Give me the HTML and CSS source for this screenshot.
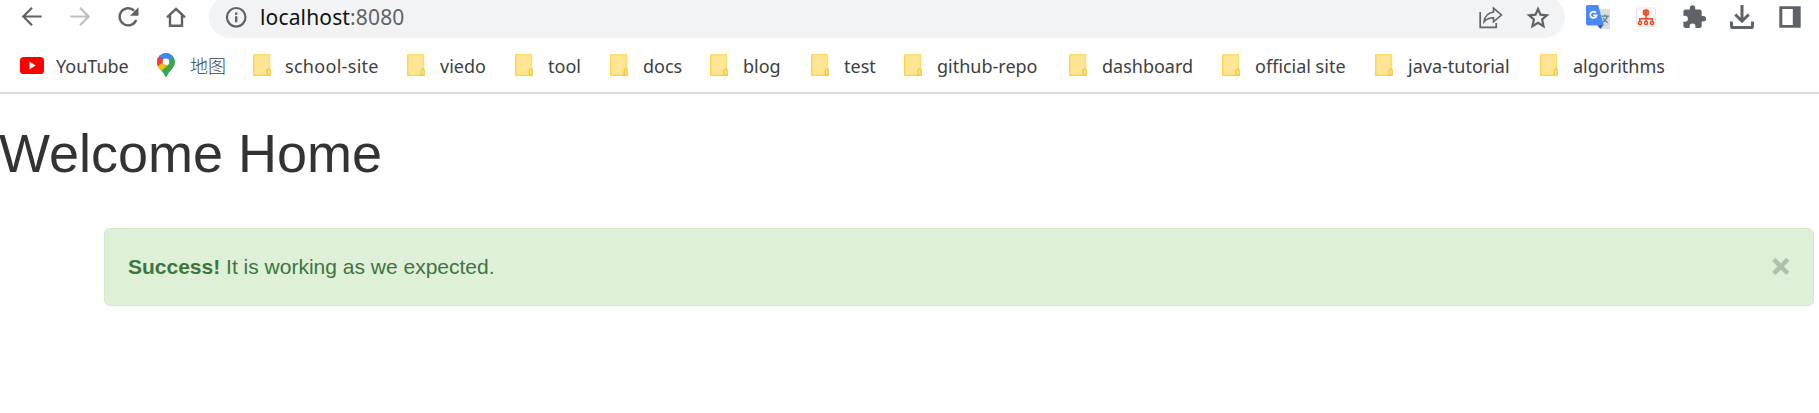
FILE: index.html
```html
<!DOCTYPE html>
<html lang="en">
<head>
<meta charset="utf-8">
<title>Welcome Home</title>
<link rel="stylesheet" href="styles.css">
</head>
<body>
<svg class="defs" aria-hidden="true">
  <symbol id="folder" viewBox="0 0 18 22">
    <rect x=".7" y=".7" width="15.8" height="20.4" rx=".6" fill="#ffe594" stroke="#fddc6c" stroke-width="1.4"/>
    <path d="M.7 1v20.3H14" fill="none" stroke="#fbd34f" stroke-width="1.2"/>
    <path d="M14.2 21v-4.6q0-1.5 1.5-1.5t1.5 1.5V21z" fill="#ffe594" stroke="#efc83c" stroke-width="1.3"/>
  </symbol>
</svg>
<header class="browser">
  <div class="toolbar">
    <nav class="nav">
      <svg class="icon" viewBox="0 0 28 28"><path d="M23.6 13.5H5.5M14 4.8 5.3 13.5l8.7 8.7" fill="none" stroke="#5f6368" stroke-width="2.2"/></svg>
      <svg class="icon" viewBox="0 0 28 28"><path d="M4.4 13.5h18.1M14 4.8l8.7 8.7-8.7 8.7" fill="none" stroke="#bcbec1" stroke-width="2.2"/></svg>
      <svg class="icon" viewBox="0 0 28 28"><path d="M20.2 7.6A8.6 8.6 0 1 0 22.2 17" fill="none" stroke="#5f6368" stroke-width="2.4"/><path d="M24.5 4.2v8.5H16z" fill="#5f6368"/></svg>
      <svg class="icon" viewBox="0 0 28 28"><path d="M5 14.3 14 5.8l9 8.5M8 12.5v10.3h12V12.5" fill="none" stroke="#5f6368" stroke-width="2.4"/></svg>
    </nav>
    <div class="address">
      <svg class="icon" viewBox="0 0 28 28"><circle cx="14.2" cy="14.300" r="9.300" fill="none" stroke="#5f6368" stroke-width="2.200"/><path d="M13 9.500h2.400v2.300H13zM13 13.200h2.400v6H13z" fill="#5f6368"/></svg>
      <span class="url">localhost<span class="port">:8080</span></span>
      <svg class="icon share" viewBox="0 0 28 28"><path d="M3.200 9v15.300h16V20" fill="none" stroke="#5f6368" stroke-width="1.700"/><path d="M16.500 5.200 24.400 12l-7.900 6.800v-4.100c-4 0-7 1.200-9.400 4 .6-5.200 3.800-8.900 9.400-9.700z" fill="none" stroke="#5f6368" stroke-width="1.600"/></svg>
      <svg class="icon star" viewBox="0 0 28 28"><path d="m14 6 2.500 5.700 6.400.6-4.800 4.200 1.400 6.600L14 19.700l-5.500 3.400 1.400-6.600-4.800-4.200 6.400-.6z" fill="none" stroke="#5f6368" stroke-width="2.200"/></svg>
    </div>
    <div class="extensions">
      <svg class="icon" viewBox="0 0 28 28"><path d="M13 6h13v20H17z" fill="#dadcdf"/><path d="M13 21.500h6.800L16.200 26z" fill="#3446b8"/><path d="M2 3.500Q2 2 3.500 2h10.700l5.600 20.500H4q-2 0-2-2z" fill="#4a8af4"/><path d="M12 9.800a3.200 3.200 0 1 0 .6 2.500H9.300" fill="none" stroke="#fff" stroke-width="1.800"/><path d="M17.500 13.200H25M20.800 11.500v1.700M23.300 13.200q-1 4.200-4.600 6.300M19 14.800q1.600 3.300 4.800 5" fill="none" stroke="#607d8b" stroke-width="1.200"/></svg>
      <svg class="icon" viewBox="0 0 28 28"><rect x="4.500" y="5" width="19" height="18.500" rx="2" fill="#fafafa" stroke="#e6e6e6"/><g fill="none" stroke="#f0441c" stroke-width="1.500"><path d="M14 12v6.500M7.800 18.500v-2.800h12.400v2.800"/><circle cx="8" cy="20" r="1.600"/><circle cx="14" cy="20" r="1.600"/><circle cx="20" cy="20" r="1.600"/></g><circle cx="14" cy="9.500" r="3.300" fill="#f0441c"/><path d="m13 8.300-1 1.200 1 1.200M15 8.300l1 1.200-1 1.200" fill="none" stroke="#ffb8a6" stroke-width=".7"/></svg>
      <svg class="icon" viewBox="0 0 28 28"><path transform="translate(1.200 1.200) scale(1.080)" d="M20.500 11H19V7c0-1.100-.9-2-2-2h-4V3.500a2.500 2.500 0 0 0-5 0V5H4c-1.100 0-2 .9-2 2v3.800h1.500a2.700 2.700 0 0 1 0 5.400H2V20c0 1.100.9 2 2 2h3.800v-1.500a2.700 2.700 0 0 1 5.400 0V22H17c1.100 0 2-.9 2-2v-4h1.500a2.500 2.500 0 0 0 0-5z" fill="#5f6368"/></svg>
      <svg class="icon" viewBox="0 0 28 28"><path d="M14 2v15.500M7.300 11.500l6.700 6.700 6.700-6.700" fill="none" stroke="#5f6368" stroke-width="3"/><path d="M3.500 18.500v4.700q0 1.300 1.300 1.300h18.400q1.300 0 1.300-1.300v-4.700" fill="none" stroke="#5f6368" stroke-width="3"/></svg>
      <svg class="icon" viewBox="0 0 28 28"><path fill-rule="evenodd" d="M3.300 3.300h21.400v21.400H3.300zM6.300 6v16h10.500V6z" fill="#5f6368"/></svg>
    </div>
  </div>
  <div class="bookmarks">
    <a class="bookmark youtube"><svg class="yt" viewBox="0 0 24 17"><rect width="24" height="17" rx="3.600" fill="#f00"/><path d="m9.500 4.800 6.300 3.700-6.300 3.700z" fill="#fff"/></svg><span>YouTube</span></a>
    <a class="bookmark maps"><svg class="pin" viewBox="0 0 18 24"><defs><clipPath id="pin-shape"><path d="M9 0a9 9 0 0 0-9 9c0 3 1.200 4.700 3 6.900 2.500 3 4.200 4.600 5 7.300q.4.800 1 .8t1-.8c.8-2.700 2.500-4.300 5-7.300 1.800-2.200 3-3.900 3-6.900a9 9 0 0 0-9-9z"/></clipPath></defs><g clip-path="url(#pin-shape)"><path d="M0 0h18v24H0z" fill="#34a853"/><path d="M-1 12.500 7 6l5.500 5L3 18.500z" fill="#fbbc04"/><path d="M0 13.500 9 7 2 2-1 6z" fill="#ea4335"/><path d="M1 14.500-1 12l8-6 4 6-7 6z" fill="#fbbc04"/><path d="m-1 5 3-3 6 6-7.500 5.500z" fill="#ea4335"/><path d="m2 3 5 4.200L11 9l5.500-5.500L14 0H2z" fill="#4285f4"/></g><circle cx="9" cy="8.800" r="3.300" fill="#fff"/></svg><span>地图</span></a>
    <a class="bookmark school"><svg class="folder"><use href="#folder"/></svg><span>school-site</span></a>
    <a class="bookmark"><svg class="folder"><use href="#folder"/></svg><span>viedo</span></a>
    <a class="bookmark"><svg class="folder"><use href="#folder"/></svg><span>tool</span></a>
    <a class="bookmark"><svg class="folder"><use href="#folder"/></svg><span>docs</span></a>
    <a class="bookmark"><svg class="folder"><use href="#folder"/></svg><span>blog</span></a>
    <a class="bookmark"><svg class="folder"><use href="#folder"/></svg><span>test</span></a>
    <a class="bookmark"><svg class="folder"><use href="#folder"/></svg><span>github-repo</span></a>
    <a class="bookmark"><svg class="folder"><use href="#folder"/></svg><span>dashboard</span></a>
    <a class="bookmark"><svg class="folder"><use href="#folder"/></svg><span>official site</span></a>
    <a class="bookmark"><svg class="folder"><use href="#folder"/></svg><span>java-tutorial</span></a>
    <a class="bookmark"><svg class="folder"><use href="#folder"/></svg><span>algorithms</span></a>
  </div>
</header>
<main class="page">
  <h1 class="title">Welcome Home</h1>
  <div class="alert">
    <p class="message"><strong>Success!</strong> It is working as we expected.</p>
    <span class="close">×</span>
  </div>
</main>
</body>
</html>
```
FILE: styles.css
```css
* { box-sizing: border-box; }
body {
  margin: 0;
  height: 413px;
  overflow: hidden;
  background: #fff;
  font-family: "Liberation Sans", Arial, sans-serif;
}
.defs { display: none; }
.browser {
  height: 94px;
  border-bottom: 2px solid #dadada;
  font-family: "Noto Sans", "Noto Sans CJK SC", sans-serif;
  overflow: hidden;
}
.toolbar {
  display: flex;
  align-items: center;
  height: 42px;
  margin-top: -4px;
  padding-left: 18px;
}
.nav, .extensions { display: flex; gap: 20px; }
.icon { display: block; width: 28px; height: 28px; flex: none; }
.address {
  display: flex;
  align-items: center;
  width: 1356px;
  height: 42px;
  margin: 0 19px;
  padding: 0 13px;
  border-radius: 21px;
  background: #f1f3f4;
}
.url {
  margin-left: 10px;
  font-size: 21px;
  line-height: 30px;
  letter-spacing: .15px;
  color: #111214;
}
.port { color: #5f6368; }
.share { margin-left: auto; }
.star { margin-left: 19px; }
.bookmarks {
  display: flex;
  align-items: center;
  height: 54px;
  padding-left: 20px;
  font-size: 18px;
  line-height: 26px;
  color: #3c4043;
  white-space: nowrap;
}
.bookmark { display: flex; align-items: center; flex: none; width: 154px; }
.bookmark span { padding-top: 2px; }
.bookmark svg { flex: none; margin-right: 15px; }
.folder { width: 18px; height: 22px; }
.bookmark .yt { width: 24px; height: 17px; margin-right: 12px; }
.pin { width: 18px; height: 24px; }
.maps { font-weight: 300; }
.school { letter-spacing: .3px; }
.school .folder { margin-right: 14px; }
.bookmark:nth-child(1) { width: 137px; }
.bookmark:nth-child(2) { width: 96px; }
.bookmark:nth-child(4) { width: 108px; }
.bookmark:nth-child(5) { width: 95px; }
.bookmark:nth-child(6) { width: 100px; }
.bookmark:nth-child(7) { width: 101px; }
.bookmark:nth-child(8) { width: 93px; }
.bookmark:nth-child(9) { width: 165px; }
.bookmark:nth-child(10) { width: 153px; }
.bookmark:nth-child(11) { width: 153px; }
.bookmark:nth-child(12) { width: 165px; }
.title {
  margin: 30px 0 0 -1px;
  font-size: 54px;
  line-height: 59px;
  font-weight: 400;
  color: #333;
}
.alert {
  display: flex;
  justify-content: space-between;
  align-items: center;
  height: 78px;
  margin: 45px 5px 0 104px;
  padding: 0 23px;
  border: 1px solid #d6e9c6;
  border-radius: 6px;
  background: #dff0d8;
  color: #3c763d;
}
.message { margin: 0; font-size: 21px; line-height: 30px; }
.close {
  padding-bottom: 2px;
  font-size: 31.5px;
  line-height: 31px;
  font-weight: 700;
  color: #000;
  opacity: .2;
  text-shadow: 0 1px 0 #fff;
  -webkit-text-stroke: 1px #000;
}
```
